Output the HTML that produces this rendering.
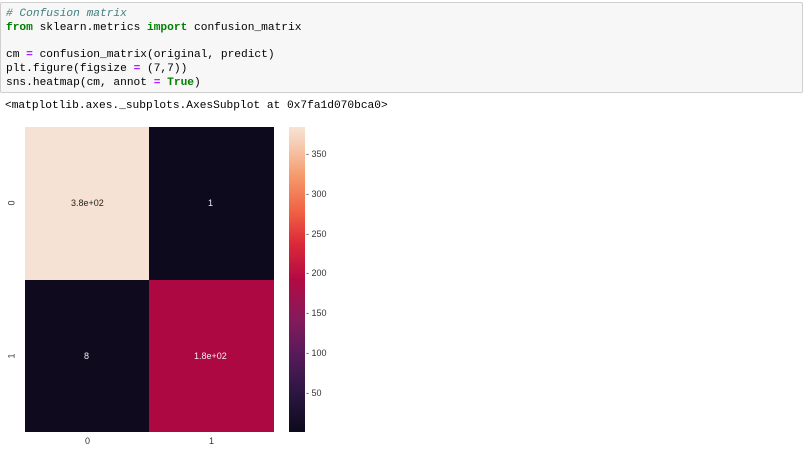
<!DOCTYPE html>
<html><head><style>
body{margin:0;width:806px;height:450px;background:#fff;overflow:hidden;position:relative;font-family:"Liberation Mono",monospace;}
.cell{position:absolute;left:0;top:2px;width:801px;height:89px;background:#f7f7f7;border:1px solid #cfcfcf;border-radius:2px;}
.code{position:absolute;left:5px;top:5px;font-size:11.2px;line-height:13.8px;color:#000;white-space:pre;}
.c{color:#408080;font-style:italic}.k{color:#008000;font-weight:bold}.o{color:#aa22ff;font-weight:bold}
.out{position:absolute;left:5px;top:100px;font-size:11.2px;white-space:pre;}
.b{position:absolute;}
.t{position:absolute;font-family:"Liberation Sans",sans-serif;font-size:9px;color:#333;}
</style></head><body>
<div class="cell"><div class="code"><span class="c"># Confusion matrix</span>
<span class="k">from</span> sklearn.metrics <span class="k">import</span> confusion_matrix

cm <span class="o">=</span> confusion_matrix(original, predict)
plt.figure(figsize <span class="o">=</span> (7,7))
sns.heatmap(cm, annot <span class="o">=</span> <span class="k">True</span>)</div></div>
<div class="out">&lt;matplotlib.axes._subplots.AxesSubplot at 0x7fa1d070bca0&gt;</div>
<div class="b" style="left:25px;top:127px;width:124px;height:153px;background:#f6e2d4"></div>
<div class="b" style="left:149px;top:127px;width:125px;height:153px;background:#0e0a1d"></div>
<div class="b" style="left:25px;top:280px;width:124px;height:152px;background:#0f0a1e"></div>
<div class="b" style="left:149px;top:280px;width:125px;height:152px;background:#ae0843"></div>
<div class="t" style="left:71px;top:198px;color:#222">3.8e+02</div>
<div class="t" style="left:208px;top:198px;color:#eee">1</div>
<div class="t" style="left:84px;top:351px;color:#eee">8</div>
<div class="t" style="left:194px;top:351px;color:#eee">1.8e+02</div>
<div class="t" style="left:9px;top:198px;transform:rotate(-90deg)">0</div>
<div class="t" style="left:9px;top:351px;transform:rotate(-90deg)">1</div>
<div class="t" style="left:85px;top:436px">0</div>
<div class="t" style="left:209px;top:436px">1</div>
<div class="b" style="left:289px;top:127px;width:16px;height:305px;background:linear-gradient(to top,#0d0a1c 0%,#2a1540 12%,#561a5a 25%,#851a5c 37%,#b30a43 50%,#dc2a39 62%,#f06043 72%,#f59a6c 84%,#f6c6aa 93%,#f7e4d5 100%)"></div>
<div class="t" style="left:306px;top:149px">- 350</div>
<div class="t" style="left:306px;top:189px">- 300</div>
<div class="t" style="left:306px;top:229px">- 250</div>
<div class="t" style="left:306px;top:268px">- 200</div>
<div class="t" style="left:306px;top:308px">- 150</div>
<div class="t" style="left:306px;top:348px">- 100</div>
<div class="t" style="left:306px;top:388px">- 50</div>
</body></html>
